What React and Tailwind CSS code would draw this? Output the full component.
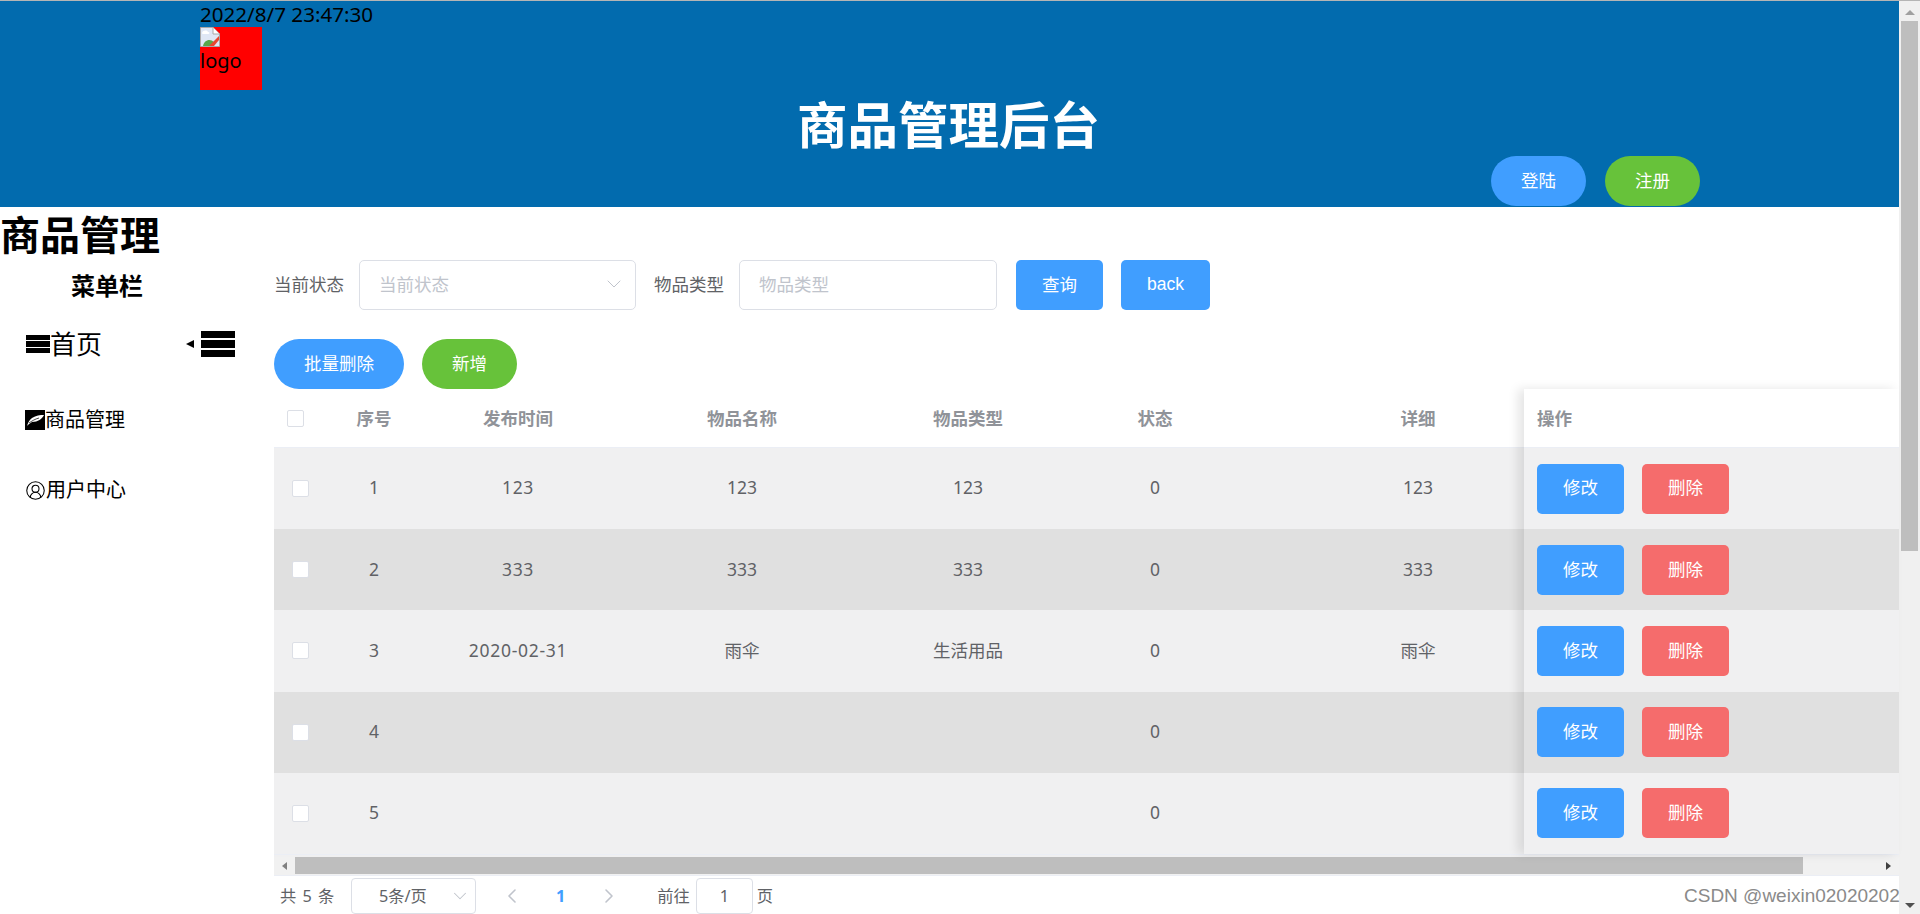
import { ChevronDown, ChevronLeft, ChevronRight, CircleUserRound } from 'lucide-react'

const ROWS = [
  { id: 1, time: '123', name: '123', type: '123', status: 0, detail: '123' },
  { id: 2, time: '333', name: '333', type: '333', status: 0, detail: '333' },
  { id: 3, time: '2020-02-31', name: '雨伞', type: '生活用品', status: 0, detail: '雨伞' },
  { id: 4, time: '', name: '', type: '', status: 0, detail: '' },
  { id: 5, time: '', name: '', type: '', status: 0, detail: '' },
]

const COLS = 'grid grid-cols-[54px_92px_196px_252px_200px_174px_352px] items-center text-center'
const FONT = "font-['Noto_Sans','Noto_Sans_CJK_SC',sans-serif]"

function Bars({ className }) {
  return (
    <span className={`flex flex-col justify-between ${className}`}>
      <span className="h-[28%] bg-black" />
      <span className="h-[28%] bg-black" />
      <span className="h-[28%] bg-black" />
    </span>
  )
}

function BrokenImage() {
  return (
    <svg width="20" height="20" viewBox="0 0 20 20" className="block">
      <path d="M0.5 0.5H13L19.5 7V19.5H0.5Z" fill="#dfe7f5" stroke="#a8a8a8" />
      <path d="M13 0.5V7H19.5" fill="#fff" stroke="#a8a8a8" />
      <path d="M2 6C3 3 7 3 8 5C10 5 10 7 8 7H3C2 7 2 6 2 6Z" fill="#fff" />
      <path d="M3 19C4 13 10 11 14 15L11 19Z" fill="#5aa64a" />
      <path d="M9 19L19 9V13L14 19Z" fill="#e8462f" />
    </svg>
  )
}

function FeatherIcon() {
  return (
    <svg width="20" height="20" viewBox="0 0 20 20" className="block">
      <rect width="20" height="20" fill="#000" />
      <path d="M2 16C3 13 4 10 7 8C11 5.5 15 5 19 5C17 9 13 12 7 12C5 13 3 15 2 16Z" fill="#fff" />
      <path d="M4 13C7 11 10 9 14 8" fill="none" stroke="#000" strokeWidth="0.7" />
    </svg>
  )
}

function Checkbox({ className }) {
  return <span className={`block w-[17px] h-[17px] rounded-[2px] border border-[#dcdfe6] bg-white ${className}`} />
}

function Btn({ color, round, children }) {
  return (
    <button className={`h-[50px] pb-[2px] text-[17.5px] text-white flex items-center justify-center ${round ? 'rounded-full' : 'rounded-[5px]'} ${color}`}>
      {children}
    </button>
  )
}

export default function App() {
  return (
    <div className={`relative flex h-[914px] overflow-hidden bg-white text-black ${FONT}`}>
      <div className="w-[1899px] shrink-0 flex flex-col">
        <header className="h-[207px] shrink-0 bg-[#026bae] border-t border-[#b5b5b5] pl-[200px]">
          <div className="h-[26px] text-[20.6px] leading-[26px] font-['Noto_Sans',sans-serif]">2022/8/7 23:47:30</div>
          <div className="w-[62px] h-[63px] bg-[#ff0000] text-[20px] leading-[28px]">
            <BrokenImage />
            logo
          </div>
          <h1 className="pr-[202px] pt-[2px] h-[66px] text-center text-[50.5px] leading-[66px] font-bold text-white">商品管理后台</h1>
          <div className="flex gap-[19px] ml-[1291px]">
            <Btn color="bg-[#409eff] w-[95px]" round>登陆</Btn>
            <Btn color="bg-[#67c23a] w-[95px]" round>注册</Btn>
          </div>
        </header>

        <div className="flex-1 flex flex-col relative">
          <h2 className="h-[54px] shrink-0 pt-[1px] text-[40px] leading-[54px] font-bold">商品管理</h2>
          <div className="flex-1 flex">
            <aside className="w-[274px] shrink-0">
              <div className="w-[214px] mt-[9px] text-center text-[24px] leading-[32px] font-bold">菜单栏</div>
              <div className="flex items-center mt-[22px] pl-[26px] h-[40px]">
                <Bars className="w-[24px] h-[18px]" />
                <span className="text-[26px] leading-[40px]">首页</span>
                <span className="ml-[84px] w-0 h-0 border-y-[4px] border-y-transparent border-r-[8px] border-r-black" />
                <Bars className="w-[34px] h-[27px] ml-[7px]" />
              </div>
              <div className="flex items-center mt-[41px] pl-[25px] h-[30px] text-[20px]">
                <FeatherIcon />
                <span>商品管理</span>
              </div>
              <div className="flex items-center mt-[40px] pl-[25px] h-[30px] text-[20px]">
                <CircleUserRound size={21} strokeWidth={1.2} />
                <span>用户中心</span>
              </div>
            </aside>

            <main className="flex-1 flex flex-col min-w-0">
              <div className="flex items-center h-[50px] mt-[-1px] text-[17.5px] text-[#606266]">
                <span className="w-[85px] pb-[2px]">当前状态</span>
                <div className="w-[277px] h-[50px] rounded-[5px] border border-[#dcdfe6] flex items-center justify-between pl-[19px] pr-[9px] pb-[2px] text-[#c0c4cc]">
                  当前状态
                  <ChevronDown size={24} strokeWidth={1} />
                </div>
                <span className="ml-[18px] w-[85px] pb-[2px]">物品类型</span>
                <div className="w-[258px] h-[50px] rounded-[5px] border border-[#dcdfe6] flex items-center pl-[19px] pb-[2px] text-[#c0c4cc]">物品类型</div>
                <div className="flex gap-[18px] ml-[19px]">
                  <Btn color="bg-[#409eff] w-[87px]">查询</Btn>
                  <Btn color="bg-[#409eff] w-[89px] font-['Liberation_Sans',sans-serif]">back</Btn>
                </div>
              </div>

              <div className="flex gap-[18px] mt-[29px]">
                <Btn color="bg-[#409eff] w-[130px]" round>批量删除</Btn>
                <Btn color="bg-[#67c23a] w-[95px]" round>新增</Btn>
              </div>

              <div className="flex">
                <div className="w-[1250px] shrink-0 overflow-hidden">
                  <div className={`${COLS} w-[1320px] h-[59px] border-b border-[#ebeef5] text-[17.5px] font-bold text-[#909399]`}>
                    <Checkbox className="ml-[13px]" />
                    <span>序号</span>
                    <span>发布时间</span>
                    <span>物品名称</span>
                    <span>物品类型</span>
                    <span>状态</span>
                    <span>详细</span>
                  </div>
                  {ROWS.map((row, i) => (
                    <div key={row.id} className={`${COLS} w-[1320px] h-[81.2px] text-[17.5px] text-[#606266] ${i % 2 ? 'bg-[#e0e0e0]' : 'bg-[#f0f0f1]'}`}>
                      <Checkbox className="ml-[18px]" />
                      <span className="pb-[2px]">{row.id}</span>
                      <span className="pb-[2px] tracking-[0.7px]">{row.time}</span>
                      <span className="pb-[2px]">{row.name}</span>
                      <span className="pb-[2px]">{row.type}</span>
                      <span className="pb-[2px]">{row.status}</span>
                      <span className="pb-[2px]">{row.detail}</span>
                    </div>
                  ))}
                </div>
                <div className="flex-1 relative shadow-[-6px_0_10px_rgba(0,0,0,0.1)]">
                  <div className="h-[59px] bg-white border-b border-[#ebeef5] flex items-center pl-[13px] text-[17.5px] font-bold text-[#909399]">操作</div>
                  {ROWS.map((row, i) => (
                    <div key={row.id} className={`h-[81.2px] flex items-center gap-[18px] pl-[13px] ${i % 2 ? 'bg-[#e0e0e0]' : 'bg-[#f0f0f1]'}`}>
                      <Btn color="bg-[#409eff] w-[87px]">修改</Btn>
                      <Btn color="bg-[#f56c6c] w-[87px]">删除</Btn>
                    </div>
                  ))}
                </div>
              </div>

              <div className="h-[3px] shrink-0 bg-[#f0f0f1] border-t border-[#ebeef5]" />
              <div className="h-[19px] shrink-0 flex items-center bg-[#f1f1f1] border-b border-[#ebeef5] pr-[8px]">
                <span className="ml-[8px] w-0 h-0 border-y-[4px] border-y-transparent border-r-[5px] border-r-[#808080]" />
                <span className="ml-[8px] w-[1508px] h-[17px] bg-[#bebebe]" />
                <span className="ml-auto w-0 h-0 border-y-[4px] border-y-transparent border-l-[5px] border-l-[#404040]" />
              </div>

              <div className="flex items-center h-[36px] mt-[2px] text-[16.25px] text-[#606266]">
                <span className="ml-[6px] w-[71px] [word-spacing:2px]">共 5 条</span>
                <div className="w-[125px] h-[36px] rounded-[4px] border border-[#dcdfe6] flex items-center justify-between pl-[27px] pr-[4px]">
                  5条/页
                  <ChevronDown size={22} strokeWidth={1.1} className="text-[#c0c4cc]" />
                </div>
                <ChevronLeft size={24} strokeWidth={1.6} className="ml-[24px] text-[#c0c4cc]" />
                <span className="ml-[32px] font-bold text-[#409eff]">1</span>
                <ChevronRight size={24} strokeWidth={1.6} className="ml-[32px] text-[#c0c4cc]" />
                <span className="ml-[36px]">前往</span>
                <div className="ml-[6px] w-[57px] h-[36px] rounded-[4px] border border-[#dcdfe6] flex items-center justify-center">1</div>
                <span className="ml-[4px]">页</span>
              </div>
            </main>
          </div>
        </div>
      </div>

      <div className="w-[21px] shrink-0 bg-[#f0f0f0] flex flex-col items-center border-t border-[#b5b5b5]">
        <span className="mt-[9px] w-0 h-0 border-x-[5px] border-x-transparent border-b-[5px] border-b-[#a0a0a0]" />
        <span className="mt-[6px] w-[17px] h-[530px] bg-[#bebebe]" />
        <span className="mt-auto mb-[6px] w-0 h-0 border-x-[5px] border-x-transparent border-t-[5px] border-t-[#505050]" />
      </div>

      <div className="absolute left-[1684px] top-[884px] text-[19px] leading-[24px] text-[#8a8a8a] font-['Liberation_Sans',sans-serif] whitespace-nowrap">CSDN @weixin02020202</div>
    </div>
  )
}
